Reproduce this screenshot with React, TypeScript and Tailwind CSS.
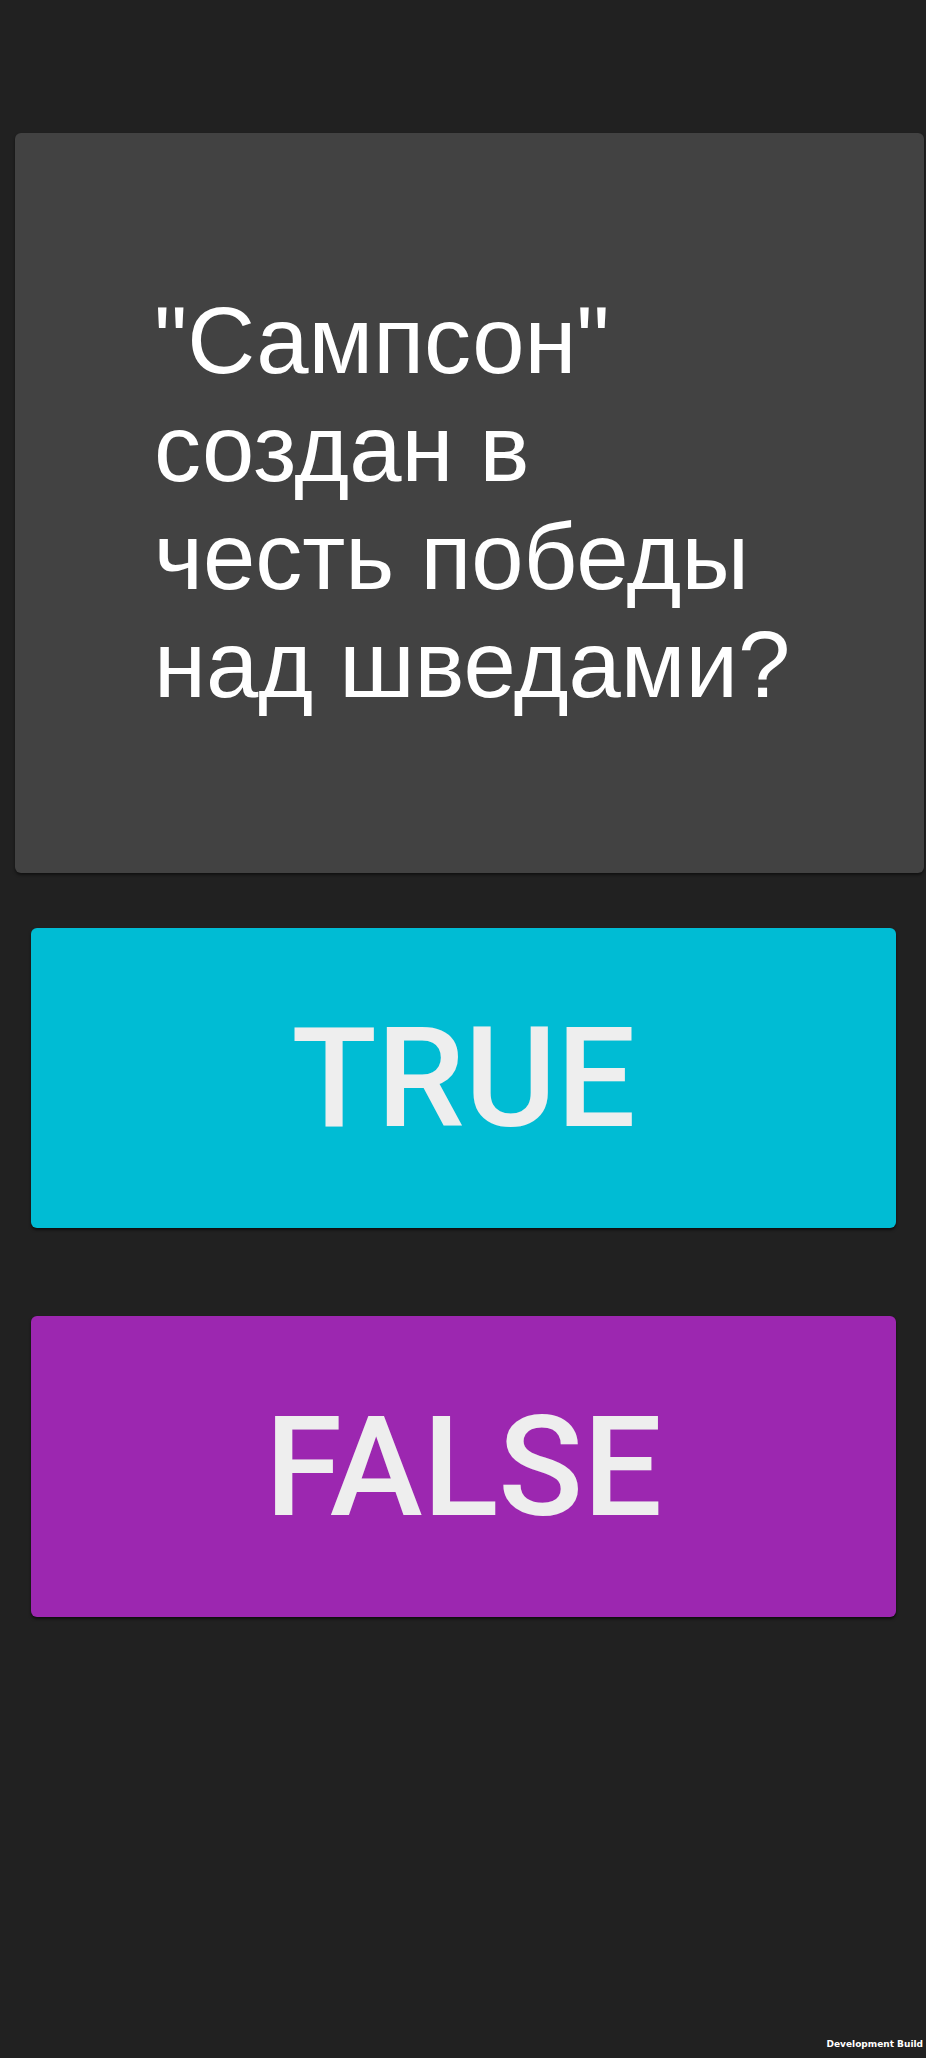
import React from 'react'

export default function App() {
  return (
    <div className="relative min-h-[2058px] w-full bg-[#212121]" style={{ fontFamily: 'Roboto, sans-serif' }}>
      <div className="flex flex-col pt-[133px]">
        <div className="ml-[15px] mr-[2px] flex h-[740px] items-center rounded-[6px] bg-[#424242] pl-[139px] shadow-[0_2px_3px_rgba(0,0,0,0.5)]">
          <p className="text-[94px] leading-[108px] text-white" style={{ fontFamily: '"Liberation Sans", Arial, sans-serif' }}>
            "Сампсон"
            <br />
            создан в
            <br />
            честь победы
            <br />
            над шведами?
          </p>
        </div>

        <button className="mx-[30px] ml-[31px] mt-[55px] flex h-[300px] items-center justify-center rounded-[6px] bg-[#00bcd4] shadow-[0_2px_3px_rgba(0,0,0,0.6)]">
          <span className="text-[140px] font-medium leading-none text-[#eeeeee]">TRUE</span>
        </button>

        <button className="mx-[30px] ml-[31px] mt-[88px] flex h-[301px] items-center justify-center rounded-[6px] bg-[#9c27b0] shadow-[0_2px_3px_rgba(0,0,0,0.6)]">
          <span className="text-[140px] font-medium leading-none text-[#eeeeee]">FALSE</span>
        </button>
      </div>

      <span className="absolute bottom-[7px] right-[3px] text-[9px] font-bold text-white" style={{ fontFamily: '"DejaVu Sans", sans-serif' }}>
        Development Build
      </span>
    </div>
  )
}
